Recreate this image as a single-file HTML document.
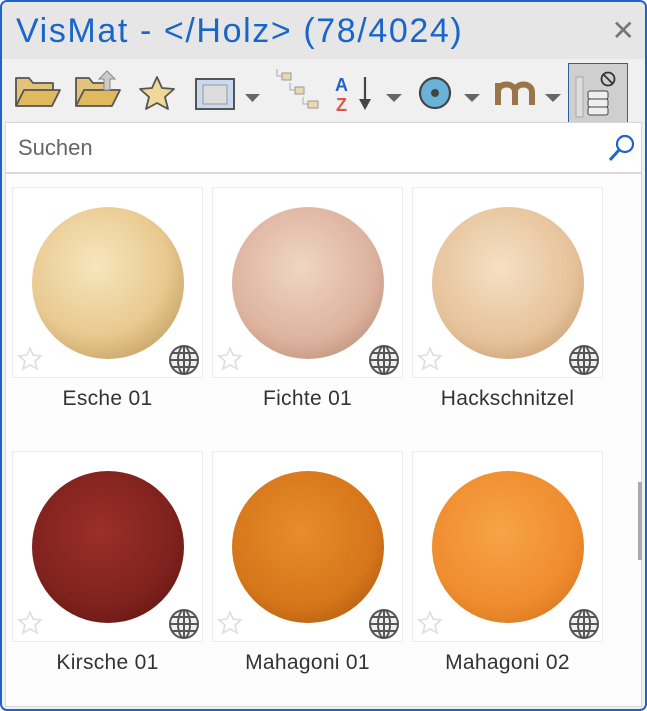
<!DOCTYPE html>
<html><head><meta charset="utf-8"><style>
*{margin:0;padding:0;box-sizing:border-box}
body{width:647px;height:711px;overflow:hidden;background:#fff;font-family:"Segoe UI","Liberation Sans",sans-serif;position:relative}
.win{position:absolute;left:0;top:0;width:647px;height:711px;border:2px solid #1f63c6;border-radius:7px;background:#f0f0f0;overflow:hidden}
.title{position:absolute;left:0;top:0;width:643px;height:57px;background:#e6e6e6}
.title span{position:absolute;left:14px;top:10px;font-size:34px;color:#1a66c8;letter-spacing:1.6px}
.close{position:absolute;right:10px;top:12px;font-size:28px;color:#777}
.tb{position:absolute;top:57px;left:0;width:643px;height:64px;background:#f0f0f0}
.panel{position:absolute;left:3px;top:120px;width:637px;height:585px;background:#fdfdfd;border:1px solid #d8d8d8}
.search{position:absolute;left:0;top:0;width:635px;height:51px;border-bottom:2px solid #d8d8d8;background:#fff}
.search span{position:absolute;left:12px;top:12px;font-size:22px;color:#666}
.card{position:absolute;width:191px;height:191px;border:1px solid #ececec;background:#fff}
.sph{position:absolute;left:19px;top:19px;width:152px;height:152px;border-radius:50%}
.lab{position:absolute;width:191px;text-align:center;font-size:21px;color:#333;letter-spacing:0.3px}
.scroll{position:absolute;left:632px;top:359px;width:4px;height:78px;background:#aaa}
</style></head><body>
<div class="win">
<div class="title"><span>VisMat - &lt;/Holz&gt; (78/4024)</span><div class="close">✕</div></div>
<div class="tb">
<svg width="643" height="64">
 <g stroke="#555" stroke-width="1.8" stroke-linejoin="round">
 <path d="M14 47V19h13l4 5h20v8" fill="#e3c27a"/>
 <path d="M14 47l8-16h36l-8 16z" fill="#e0b85e"/>
 <path d="M74 47V19h13l4 5h14v8" fill="#e3c27a"/>
 <path d="M74 47l8-16h36l-8 16z" fill="#e0b85e"/>
 </g>
 <path d="M102 31v-11h-5l8-8 8 8h-5v11z" fill="#ccc" stroke="#888"/>
 <path d="M155 18l5 11 12 1-9 8 3 12-11-6-11 6 3-12-9-8 12-1z" fill="#f0d79a" stroke="#555" stroke-width="1.8" stroke-linejoin="round"/>
 <rect x="194" y="20" width="38" height="30" fill="#c9d9ee" stroke="#555" stroke-width="2"/>
 <rect x="201" y="26" width="24" height="19" fill="#ddd" stroke="#999"/>
 <path d="M243 35h15l-7.5 8z" fill="#666"/>
 <g fill="#e8d9b0" stroke="#999"><rect x="280" y="14" width="9" height="7"/><rect x="293" y="28" width="9" height="7"/><rect x="306" y="42" width="10" height="7"/></g>
 <path d="M275 10v7h5M288 24v7h5M301 38v7h5" stroke="#aaa" fill="none"/>
 <text x="333" y="32" font-family="Liberation Sans" font-weight="bold" font-size="18" fill="#1f63c6">A</text>
 <text x="334" y="52" font-family="Liberation Sans" font-weight="bold" font-size="18" fill="#e05545">Z</text>
 <path d="M363 18v26" stroke="#444" stroke-width="2.2"/><path d="M357 40l6 11 6-11z" fill="#444"/>
 <path d="M384 35h16l-8 8z" fill="#666"/>
 <circle cx="433" cy="34" r="15" fill="#6ab3d8" stroke="#444" stroke-width="2.2"/><circle cx="433" cy="34" r="4" fill="#444"/>
 <path d="M462 35h16l-8 8z" fill="#666"/>
 <path d="M496 46V24M496 33c0-10 17-10 17 0v13M513 33c0-10 17-10 17 0v13" stroke="#9a7549" stroke-width="6" fill="none"/>
 <path d="M543 35h16l-8 8z" fill="#666"/>
 <rect x="566.5" y="4.5" width="59" height="59" fill="#cfcfcf" stroke="#2d5fa8"/>
 <rect x="574" y="18" width="7" height="40" fill="#ddd" stroke="#aaa"/>
 <g fill="#eee" stroke="#444"><rect x="586" y="32" width="20" height="8" rx="2"/><rect x="586" y="40" width="20" height="8" rx="2"/><rect x="586" y="48" width="20" height="8" rx="2"/></g>
 <circle cx="606" cy="20" r="6.5" fill="none" stroke="#333" stroke-width="1.8"/><path d="M601.5 15.5l9 9" stroke="#333" stroke-width="1.8"/>
</svg>
</div>
<div class="panel">
 <div class="search"><span>Suchen</span>
  <svg style="position:absolute;left:600px;top:10px" width="30" height="30"><circle cx="19" cy="11" r="8" fill="none" stroke="#1f63c6" stroke-width="2.2"/><path d="M13 17L4 27" stroke="#1f63c6" stroke-width="3"/></svg>
 </div>
 <div class="card" style="left:6px;top:64px"><div class="sph" style="background:radial-gradient(circle at 42% 38%,#f6e6bd,#e9c98f 55%,#b99459 92%,#7a5e33)"></div></div>
 <div class="card" style="left:206px;top:64px"><div class="sph" style="background:radial-gradient(circle at 45% 40%,#efd6c4,#dcb29d 60%,#b38772 92%,#7d5a48)"></div></div>
 <div class="card" style="left:406px;top:64px"><div class="sph" style="background:radial-gradient(circle at 45% 40%,#f5e0c4,#e6c29a 60%,#c09469 92%,#8a6441)"></div></div>
 <div class="lab" style="left:6px;top:264px">Esche 01</div>
 <div class="lab" style="left:206px;top:264px">Fichte 01</div>
 <div class="lab" style="left:406px;top:264px">Hackschnitzel</div>
 <div class="card" style="left:6px;top:328px"><div class="sph" style="background:radial-gradient(circle at 45% 40%,#9b2f28,#7f211d 60%,#5c1510 92%,#3a0c08)"></div></div>
 <div class="card" style="left:206px;top:328px"><div class="sph" style="background:radial-gradient(circle at 45% 40%,#e88d2a,#d5761a 60%,#a95510 92%,#6d350a)"></div></div>
 <div class="card" style="left:406px;top:328px"><div class="sph" style="background:radial-gradient(circle at 45% 40%,#f7a348,#ef8c2e 60%,#d0701c 92%,#95500f)"></div></div>
 <div class="lab" style="left:6px;top:528px">Kirsche 01</div>
 <div class="lab" style="left:206px;top:528px">Mahagoni 01</div>
 <div class="lab" style="left:406px;top:528px">Mahagoni 02</div>
 <div class="scroll"></div>
</div>
</div>
<svg width="647" height="711" style="position:absolute;left:0;top:0">
 <g fill="none" stroke="#ddd" stroke-width="1.5">
  <path d="M30 348l3 7 8 1-6 5 2 8-7-4-7 4 2-8-6-5 8-1z"/>
  <path d="M230 348l3 7 8 1-6 5 2 8-7-4-7 4 2-8-6-5 8-1z"/>
  <path d="M430 348l3 7 8 1-6 5 2 8-7-4-7 4 2-8-6-5 8-1z"/>
  <path d="M30 612l3 7 8 1-6 5 2 8-7-4-7 4 2-8-6-5 8-1z"/>
  <path d="M230 612l3 7 8 1-6 5 2 8-7-4-7 4 2-8-6-5 8-1z"/>
  <path d="M430 612l3 7 8 1-6 5 2 8-7-4-7 4 2-8-6-5 8-1z"/>
 </g>
 <g fill="#eee" stroke="#555" stroke-width="2">
  <g transform="translate(184,360)"><circle r="14"/><ellipse rx="6" ry="14" fill="none"/><path d="M-14 0h28M0-14v28M-12-7h24M-12 7h24" fill="none"/></g>
  <g transform="translate(384,360)"><circle r="14"/><ellipse rx="6" ry="14" fill="none"/><path d="M-14 0h28M0-14v28M-12-7h24M-12 7h24" fill="none"/></g>
  <g transform="translate(584,360)"><circle r="14"/><ellipse rx="6" ry="14" fill="none"/><path d="M-14 0h28M0-14v28M-12-7h24M-12 7h24" fill="none"/></g>
  <g transform="translate(184,624)"><circle r="14"/><ellipse rx="6" ry="14" fill="none"/><path d="M-14 0h28M0-14v28M-12-7h24M-12 7h24" fill="none"/></g>
  <g transform="translate(384,624)"><circle r="14"/><ellipse rx="6" ry="14" fill="none"/><path d="M-14 0h28M0-14v28M-12-7h24M-12 7h24" fill="none"/></g>
  <g transform="translate(584,624)"><circle r="14"/><ellipse rx="6" ry="14" fill="none"/><path d="M-14 0h28M0-14v28M-12-7h24M-12 7h24" fill="none"/></g>
 </g>
</svg>
</body></html>
